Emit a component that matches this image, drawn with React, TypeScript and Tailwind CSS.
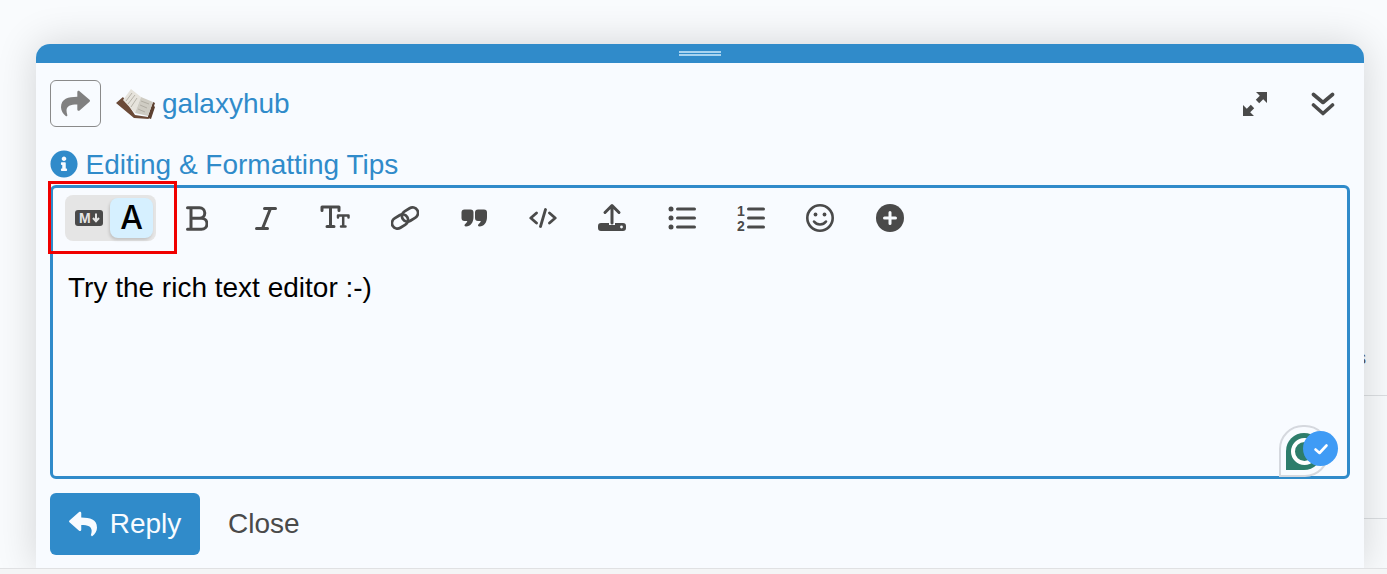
import { ReactNode } from "react";
import { FaShare, FaInfoCircle, FaReply } from "react-icons/fa";

const INK = "#4a4a4a";

function BoldIcon() {
  return (
    <svg viewBox="0 0 22 25" className="w-[22px] h-[25px]" fill="none" stroke={INK} strokeWidth="3" strokeLinecap="round" strokeLinejoin="round">
      <path d="M1.500 1.700h12a5.300 5.300 0 0 1 0 10.600H5M5 1.700v21.600M5 12.300h10.500a5.500 5.500 0 0 1 0 11H1.500" />
    </svg>
  );
}

function ItalicIcon() {
  return (
    <svg viewBox="0 0 22 25" className="w-[22px] h-[25px]" fill="none" stroke={INK} strokeWidth="3" strokeLinecap="round">
      <path d="M9.500 2.500h11M1.500 22.500h11M15.500 2.500l-8 20" />
    </svg>
  );
}

function TextSizeIcon() {
  return (
    <svg viewBox="0 0 30 26" className="w-[30px] h-[26px]" fill="none" stroke={INK} strokeLinecap="round" strokeLinejoin="round">
      <path d="M2 5.500V2h17v3.500M10.500 2v19M7 21.500h7" strokeWidth="3" />
      <path d="M18 12.500V10.500h10.500v2M23.200 10.500v10.500M21 21.500h4.500" strokeWidth="2.500" />
    </svg>
  );
}

function LinkIcon() {
  return (
    <svg viewBox="0 0 28 24" className="w-[28px] h-[24px]" fill="none" stroke={INK} strokeWidth="2.700">
      <rect x="0.500" y="10" width="17" height="11" rx="5.500" transform="rotate(-32 9 15.500)" />
      <rect x="10.500" y="3" width="17" height="11" rx="5.500" transform="rotate(-32 19 8.500)" />
    </svg>
  );
}

function QuoteIcon() {
  return (
    <svg viewBox="0 0 26 18" className="w-[26px] h-[18px]" fill={INK}>
      <path d="M.5 3.500a3 3 0 0 1 3-3h6a3 3 0 0 1 3 3V8c0 5.500-3 9.500-7.500 9.500-1.500 0-2-1.500-1-2.300 1-.8 2-1.700 2.300-3.200H3.500a3 3 0 0 1-3-3z" />
      <path d="M14 3.500a3 3 0 0 1 3-3h6a3 3 0 0 1 3 3V8c0 5.500-3 9.500-7.500 9.500-1.500 0-2-1.500-1-2.300 1-.8 2-1.700 2.300-3.200H17a3 3 0 0 1-3-3z" />
    </svg>
  );
}

function CodeIcon() {
  return (
    <svg viewBox="0 0 28 20" className="w-[28px] h-[20px]" fill="none" stroke={INK} strokeWidth="2.800" strokeLinecap="round" strokeLinejoin="round">
      <path d="M7.500 5 1.800 10l5.700 5M20.500 5l5.700 5-5.700 5M16.500 1.500l-5 17" />
    </svg>
  );
}

function UploadIcon() {
  return (
    <svg viewBox="0 0 28 30" className="w-[28px] h-[30px]">
      <path d="M14 3v17M7 9.500 14 2.500l7 7" fill="none" stroke={INK} strokeWidth="3" strokeLinecap="round" strokeLinejoin="round" />
      <path d="M3 20h8v2h6v-2h8a3 3 0 0 1 3 3v2a3 3 0 0 1-3 3H3a3 3 0 0 1-3-3v-2a3 3 0 0 1 3-3z" fill={INK} />
      <circle cx="23.500" cy="24" r="1.400" fill="#f8fbff" />
    </svg>
  );
}

function ListIcon() {
  return (
    <svg viewBox="0 0 28 24" className="w-[28px] h-[24px]" fill={INK} stroke={INK}>
      <circle cx="3" cy="3" r="2.500" stroke="none" />
      <circle cx="3" cy="12" r="2.500" stroke="none" />
      <circle cx="3" cy="21" r="2.500" stroke="none" />
      <path d="M9.500 3h17M9.500 12h17M9.500 21h17" strokeWidth="3" strokeLinecap="round" />
    </svg>
  );
}

function OrderedListIcon() {
  return (
    <svg viewBox="0 -3 28 32" className="w-[28px] h-[32px]" stroke={INK}>
      <text x="0" y="10.500" fill={INK} stroke="none" fontSize="14" fontWeight="700" fontFamily="Liberation Sans">1</text>
      <text x="0" y="25.500" fill={INK} stroke="none" fontSize="14" fontWeight="700" fontFamily="Liberation Sans">2</text>
      <path d="M11.500 4h15M11.500 13h15M11.500 22h15" strokeWidth="3" strokeLinecap="round" />
    </svg>
  );
}

function SmileIcon() {
  return (
    <svg viewBox="0 0 28 28" className="w-[28px] h-[28px]" fill="none" stroke={INK} strokeWidth="2.600" strokeLinecap="round">
      <circle cx="14" cy="14" r="12.700" />
      <path d="M8 17.500c3 4 9 4 12 0" />
      <circle cx="9.500" cy="10.500" r="1.900" fill={INK} stroke="none" />
      <circle cx="18.500" cy="10.500" r="1.900" fill={INK} stroke="none" />
    </svg>
  );
}

function PlusIcon() {
  return (
    <svg viewBox="0 0 28 28" className="w-[28px] h-[28px]">
      <circle cx="14" cy="14" r="14" fill={INK} />
      <path d="M14 8.500v11M8.500 14h11" stroke="#f8fbff" strokeWidth="3" strokeLinecap="round" />
    </svg>
  );
}

function ExpandIcon() {
  return (
    <svg viewBox="0 0 24 24" className="w-[24px] h-[24px]" fill={INK}>
      <path d="M24 0v11l-3.800-3.800-4 4-3.400-3.400 4-4L13 0zM0 24V13l3.800 3.800 4-4 3.400 3.400-4 4L11 24z" />
    </svg>
  );
}

function ChevronsIcon() {
  return (
    <svg viewBox="0 0 24 24" className="w-[24px] h-[24px]" fill="none" stroke={INK} strokeWidth="3.600" strokeLinecap="round" strokeLinejoin="round">
      <path d="M2.500 2.500 12 10.500l9.500-8M2.500 13 12 21.500l9.500-8.500" />
    </svg>
  );
}

function MarkdownIcon() {
  return (
    <svg viewBox="0 0 28 16" className="w-[28px] h-[16px]">
      <rect width="28" height="16" rx="3" fill={INK} />
      <text x="4" y="13" fill="#e5e5e5" fontSize="14" fontWeight="700" fontFamily="Liberation Sans">M</text>
      <path d="M21 3.500v7M18 8l3 3.200 3-3.200" fill="none" stroke="#e5e5e5" strokeWidth="2" />
    </svg>
  );
}

function BookIcon() {
  return (
    <svg viewBox="0 0 40 32" className="w-[40px] h-[32px]">
      <path d="M1 15 8 9l12 18 13 2 1 2-15-1z" fill="#6b4a38" />
      <path d="M33 28 38 14l2 1-1 3 1 1-4 12-3-1z" fill="#5c4030" />
      <path d="M8 12 16 1l10 8-6 16z" fill="#e6e3dc" />
      <path d="M20 25 26 9l12 5-5 14z" fill="#cfccc3" />
      <path d="M11 13l6-8M13 16l7-9M16 19l6-9M26 13l8 3M25 17l7 3M23 21l7 3" stroke="#aaa69c" strokeWidth="0.800" />
    </svg>
  );
}

function GrammarBadge() {
  return (
    <div className="absolute right-[8px] -bottom-[3px] w-[60px] h-[54px]">
      <div className="absolute left-0 top-0 w-[50px] h-[52px] rounded-t-[24px] rounded-br-[24px] bg-[#f8fbff] border-2 border-[#d5d8de] flex items-end justify-start p-[5px]">
        <div className="w-[38px] h-[37px] rounded-t-[18px] rounded-br-[18px] bg-[#2d7d6b] flex items-center justify-start pl-[5px]">
          <div className="w-[27px] h-[27px] rounded-full border-[4px] border-white" />
        </div>
      </div>
      <div className="absolute right-[1px] top-[6px] w-[35px] h-[35px] rounded-full bg-[#3f9bf5] flex items-center justify-center">
        <svg viewBox="0 0 16 16" className="w-[16px] h-[16px]" fill="none" stroke="white" strokeWidth="2.600" strokeLinecap="round" strokeLinejoin="round">
          <path d="M2.500 8.500 6.500 12 13.500 4.500" />
        </svg>
      </div>
    </div>
  );
}

const toolbar: ReactNode[] = [
  <BoldIcon />,
  <ItalicIcon />,
  <TextSizeIcon />,
  <LinkIcon />,
  <QuoteIcon />,
  <CodeIcon />,
  <UploadIcon />,
  <ListIcon />,
  <OrderedListIcon />,
  <SmileIcon />,
  <PlusIcon />,
];

export default function App() {
  return (
    <div className="w-[1387px] h-[574px] overflow-hidden bg-[#f9fbfd] flex flex-col font-['Liberation_Sans',Arial,sans-serif]">
      <div className="h-[568px] shrink-0 flex">
        <div className="w-[36px] shrink-0" />
        <div className="w-[1328px] shrink-0 mt-[44px] h-[524px] bg-[#f8fbff] rounded-t-[14px] shadow-[0_0_40px_rgba(0,0,0,0.16)] flex flex-col relative z-10">
          {/* Drag handle */}
          <div className="h-[19px] bg-[#308bca] rounded-t-[14px] flex flex-col items-center pt-[7px] gap-[1px]">
            <div className="w-[42px] h-[2px] bg-[#a8d3ef]" />
            <div className="w-[42px] h-[2px] bg-[#a8d3ef]" />
          </div>

          <div className="px-[14px] flex flex-col">
            {/* Header row */}
            <div className="mt-[17px] h-[47px] flex items-center">
              <div className="w-[51px] h-[47px] border border-[#8a8a8a] rounded-[6px] flex items-center justify-center">
                <FaShare className="text-[29px] text-[#808080]" />
              </div>
              <div className="ml-[14px] mr-[7px]">
                <BookIcon />
              </div>
              <span className="mt-[1px] text-[28px] leading-none text-[#308bca]">galaxyhub</span>
              <div className="ml-auto flex items-center">
                <div className="mr-[44px]">
                  <ExpandIcon />
                </div>
                <div className="mr-[15px]">
                  <ChevronsIcon />
                </div>
              </div>
            </div>

            {/* Tips link */}
            <div className="mt-[23px] h-[28px] flex items-center">
              <FaInfoCircle className="text-[28px] text-[#308bca]" />
              <span className="ml-[7.500px] mt-[1px] text-[28px] leading-none text-[#308bca]">Editing &amp; Formatting Tips</span>
            </div>

            {/* Editor */}
            <div className="mt-[7px] h-[294px] border-[3px] border-[#308bca] rounded-[6px] relative">
              <div className="flex items-center pl-[12px] pt-[7px]">
                <div className="w-[91px] h-[46px] bg-[#e5e5e5] rounded-[8px] flex items-center pl-[10px]">
                  <MarkdownIcon />
                  <div className="ml-[7px] w-[43px] h-[40px] bg-[#d6f0ff] rounded-[8px] shadow-[-1px_2px_3px_rgba(0,0,0,0.15)] flex items-center justify-center">
                    <span className="text-[32px] leading-none font-medium text-black font-['Inter',sans-serif]">A</span>
                  </div>
                </div>
                <div className="ml-[6px] flex items-center">
                  {toolbar.map((icon, i) => (
                    <div key={i} className="w-[69.300px] h-[46px] flex items-center justify-center">
                      {icon}
                    </div>
                  ))}
                </div>
              </div>
              <p className="mt-[32px] ml-[15px] text-[28px] leading-[30px] text-black">Try the rich text editor :-)</p>
              <GrammarBadge />
            </div>

            {/* Actions */}
            <div className="mt-[14px] flex items-center">
              <div className="w-[150px] h-[62px] bg-[#308bca] rounded-[6px] flex items-center justify-center gap-[13px]">
                <FaReply className="text-[28px] text-[#f8fbff]" />
                <span className="text-[28px] leading-none text-[#f8fbff]">Reply</span>
              </div>
              <span className="ml-[28px] text-[28px] leading-none text-[#4a4a4a]">Close</span>
            </div>
          </div>

          {/* Annotation */}
          <div className="absolute left-[12px] top-[137px] w-[129px] h-[73px] border-[3px] border-[#f00000]" />
        </div>

        {/* Page behind composer */}
        <div className="w-[23px] shrink-0 flex flex-col">
          <div className="h-[396px] pt-[348px] border-b border-[#dcdfe2]">
            <span className="block -ml-[7px] text-[18px] leading-[20px] text-[#555]">s</span>
          </div>
          <div className="h-[123px] border-b border-[#dcdfe2]" />
        </div>
      </div>

      {/* Footer edge */}
      <div className="flex-1 bg-[#f4f5f6] border-t border-[#e0e1e3] relative z-20" />
    </div>
  );
}
